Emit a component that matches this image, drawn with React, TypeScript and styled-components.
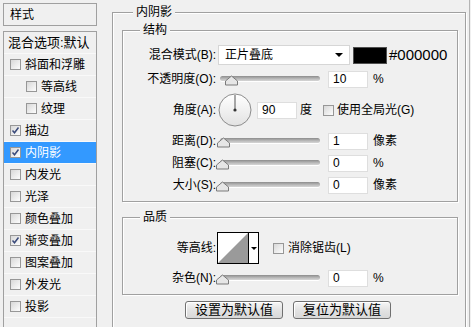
import styled, { createGlobalStyle } from 'styled-components';

const GlobalStyle = createGlobalStyle`
  html, body { margin: 0; padding: 0; background: #f0f0f0; }
  body {
    width: 471px;
    height: 327px;
    overflow: hidden;
    font-family: "Liberation Sans", "Noto Sans CJK SC", sans-serif;
    font-size: 12px;
    line-height: 14px;
    color: #000;
  }
  * { box-sizing: border-box; }
`;

const Dialog = styled.div`
  display: flex;
  width: 471px;
  height: 327px;
  overflow: hidden;
`;

/* ---------- left list ---------- */

const Sidebar = styled.div`
  width: 94px;
  margin-left: 3px;
  padding-top: 3px;
  display: flex;
  flex-direction: column;
  gap: 5px;
  flex-shrink: 0;
`;

const SideHeader = styled.div`
  height: 23px;
  border: 1px solid #a0a0a0;
  padding-left: 6px;
  display: flex;
  align-items: center;
`;

const SideList = styled.div`
  flex: 1;
  border: 1px solid #a0a0a0;
  border-bottom: none;
  display: flex;
  flex-direction: column;
`;

const SideItem = styled.div<{ $indent?: boolean; $active?: boolean }>`
  height: 22px;
  flex-shrink: 0;
  display: flex;
  align-items: center;
  gap: 4px;
  padding-left: ${p => (p.$indent ? 22 : 6)}px;
  border-bottom: 1px solid #f9f9f9;
  white-space: nowrap;
  background: ${p => (p.$active ? '#3399ff' : 'transparent')};
  color: ${p => (p.$active ? '#fff' : '#000')};
`;

const BlendItem = styled(SideItem)`
  padding-left: 4px;
  font-size: 13px;
`;

const Box = styled.span<{ $ml?: number }>`
  width: 11px;
  height: 11px;
  flex-shrink: 0;
  margin-left: ${p => p.$ml ?? 0}px;
  border: 1px solid #979797;
  background: linear-gradient(135deg, #d8d8d8, #fdfdfd);
  display: flex;
  align-items: center;
  justify-content: center;
`;

const Check = ({ on, ml }: { on?: boolean; ml?: number }) => (
  <Box $ml={ml}>
    {on && (
      <svg width="9" height="9" viewBox="0 0 9 9">
        <path d="M1.5 4.5 L3.5 6.8 L7.5 1.5" fill="none" stroke="#3a4a7a" strokeWidth="1.5" />
      </svg>
    )}
  </Box>
);

/* ---------- right panel ---------- */

const Main = styled.div`
  flex: 1;
  min-width: 0;
  padding: 5px 3px 0 15px;
  margin-right: 1px;
  border-right: 1px solid #b4b4b4;
`;

const Group = styled.fieldset<{ $pad: string; $mt?: number }>`
  margin: ${p => p.$mt ?? 0}px 0 0 0;
  min-width: 0;
  border: 1px solid #a0a0a0;
  box-shadow: inset 1px 1px 0 #fff, 1px 1px 0 #fff;
  padding: ${p => p.$pad};
`;

const OuterGroup = styled(Group)`
  height: 420px;
`;

const Legend = styled.legend<{ $ml: number }>`
  margin-left: ${p => p.$ml}px;
  padding: 0 3px;
  line-height: 14px;
  background: #f0f0f0;
`;

const Row = styled.div<{ $h: number; $mt?: number }>`
  display: flex;
  align-items: center;
  height: ${p => p.$h}px;
  margin-top: ${p => p.$mt ?? 0}px;
  white-space: nowrap;
`;

const Label = styled.div`
  width: 93px;
  flex-shrink: 0;
  text-align: right;
`;

const Select = styled.div`
  margin-left: 2px;
  width: 132px;
  height: 20px;
  border: 1px solid #d6d6d6;
  background: #fff;
  display: flex;
  align-items: center;
  justify-content: space-between;
  padding: 0 6px;
`;

const Arrow = styled.span`
  width: 0;
  height: 0;
  border-left: 4px solid transparent;
  border-right: 4px solid transparent;
  border-top: 4px solid #000;
`;

const Swatch = styled.div`
  margin-left: 3px;
  width: 34px;
  height: 17px;
  background: #000;
  border: 1px solid #505050;
`;

const Hex = styled.span`
  margin-left: 2px;
  font-size: 15px;
`;

const SliderBox = styled.div`
  position: relative;
  width: 100px;
  height: 18px;
  margin-left: 4px;
  flex-shrink: 0;
`;

const Track = styled.div`
  margin-top: 6px;
  height: 5px;
  border-radius: 3px;
  background: linear-gradient(#8c8c8c, #bdbdbd 60%, #d6d6d6);
  box-shadow: 0 1px 0 #fff;
`;

const Thumb = styled.svg`
  position: absolute;
  top: 5px;
`;

const Slider = ({ value }: { value: number }) => (
  <SliderBox>
    <Track />
    <Thumb width="15" height="11" viewBox="0 0 15 11" style={{ left: value * 0.9 - 5 }}>
      <path d="M1.5 10 L1.5 6 L7.5 1 L13.5 6 L13.5 10 Z" fill="#e6e6e6" stroke="#7b7b7b" />
    </Thumb>
  </SliderBox>
);

const Field = styled.div<{ $ml?: number }>`
  margin-left: ${p => p.$ml ?? 8}px;
  width: 40px;
  height: 17px;
  flex-shrink: 0;
  border: 1px solid #dedede;
  background: #fff;
  padding-left: 4px;
  line-height: 15px;
`;

const Unit = styled.span<{ $ml?: number }>`
  margin-left: ${p => p.$ml ?? 5}px;
`;

const Dial = styled.svg`
  margin-left: 2px;
  flex-shrink: 0;
`;

const ContourBox = styled.div`
  margin-left: 1px;
  width: 42px;
  height: 32px;
  border: 1px solid #000;
  display: flex;
  background: #fff;
`;

const ContourDrop = styled.div`
  flex: 1;
  border-left: 1px solid #000;
  display: flex;
  align-items: center;
  justify-content: center;
`;

const SmallArrow = styled.span`
  width: 0;
  height: 0;
  border-left: 3px solid transparent;
  border-right: 3px solid transparent;
  border-top: 3px solid #000;
`;

const ButtonRow = styled.div`
  display: flex;
  justify-content: center;
  gap: 10px;
  margin-top: 6px;
  padding-right: 4px;
`;

const Button = styled.div`
  width: 98px;
  height: 18px;
  border: 1px solid #707070;
  border-radius: 3px;
  background: linear-gradient(#f7f7f7, #e3e3e3 50%, #d8d8d8);
  box-shadow: inset 1px 1px 0 #fff;
  display: flex;
  align-items: center;
  justify-content: center;
  font-size: 13px;
`;

const items: { name: string; on?: boolean; indent?: boolean; active?: boolean }[] = [
  { name: '斜面和浮雕' },
  { name: '等高线', indent: true },
  { name: '纹理', indent: true },
  { name: '描边', on: true },
  { name: '内阴影', on: true, active: true },
  { name: '内发光' },
  { name: '光泽' },
  { name: '颜色叠加' },
  { name: '渐变叠加', on: true },
  { name: '图案叠加' },
  { name: '外发光' },
  { name: '投影' },
];

const SliderRow = ({ label, value, unit, mt }: { label: string; value: number; unit: string; mt: number }) => (
  <Row $h={18} $mt={mt}>
    <Label>{label}</Label>
    <Slider value={value} />
    <Field>{value}</Field>
    <Unit>{unit}</Unit>
  </Row>
);

export default function App() {
  return (
    <>
      <GlobalStyle />
      <Dialog>
        <Sidebar>
          <SideHeader>样式</SideHeader>
          <SideList>
            <BlendItem>混合选项:默认</BlendItem>
            {items.map(it => (
              <SideItem key={it.name} $indent={it.indent} $active={it.active}>
                <Check on={it.on} />
                {it.name}
              </SideItem>
            ))}
          </SideList>
        </Sidebar>

        <Main>
          <OuterGroup $pad="4px 7px 0 9px">
            <Legend $ml={11}>内阴影</Legend>

            <Group $pad="8px 0 7px 0">
              <Legend $ml={17}>结构</Legend>
              <Row $h={20}>
                <Label>混合模式(B):</Label>
                <Select>
                  正片叠底
                  <Arrow />
                </Select>
                <Swatch />
                <Hex>#000000</Hex>
              </Row>
              <SliderRow label="不透明度(O):" value={10} unit="%" mt={5} />
              <Row $h={34} $mt={5}>
                <Label>角度(A):</Label>
                <Dial width="34" height="34" viewBox="0 0 34 34">
                  <defs>
                    <linearGradient id="dialFill" x1="0" y1="0" x2="0" y2="1">
                      <stop offset="0" stopColor="#ffffff" />
                      <stop offset="1" stopColor="#e2e2e2" />
                    </linearGradient>
                  </defs>
                  <circle cx="17" cy="17" r="16" fill="url(#dialFill)" stroke="#8c8c8c" />
                  <line x1="17" y1="17" x2="17" y2="2" stroke="#555" strokeWidth="1" />
                  <circle cx="17" cy="17" r="1.6" fill="#333" />
                </Dial>
                <Field $ml={5}>90</Field>
                <Unit $ml={3}>度</Unit>
                <Check ml={11} />
                <Unit $ml={3}>使用全局光(G)</Unit>
              </Row>
              <SliderRow label="距离(D):" value={1} unit="像素" mt={5} />
              <SliderRow label="阻塞(C):" value={0} unit="%" mt={4} />
              <SliderRow label="大小(S):" value={0} unit="像素" mt={4} />
            </Group>

            <Group $pad="8px 0 7px 0" $mt={8}>
              <Legend $ml={17}>品质</Legend>
              <Row $h={32}>
                <Label>等高线:</Label>
                <ContourBox>
                  <svg width="30" height="30" viewBox="0 0 30 30">
                    <polygon points="0,30 30,0 30,30" fill="#9a9a9a" />
                  </svg>
                  <ContourDrop>
                    <SmallArrow />
                  </ContourDrop>
                </ContourBox>
                <Check ml={14} />
                <Unit $ml={4}>消除锯齿(L)</Unit>
              </Row>
              <SliderRow label="杂色(N):" value={0} unit="%" mt={5} />
            </Group>

            <ButtonRow>
              <Button>设置为默认值</Button>
              <Button>复位为默认值</Button>
            </ButtonRow>
          </OuterGroup>
        </Main>
      </Dialog>
    </>
  );
}
